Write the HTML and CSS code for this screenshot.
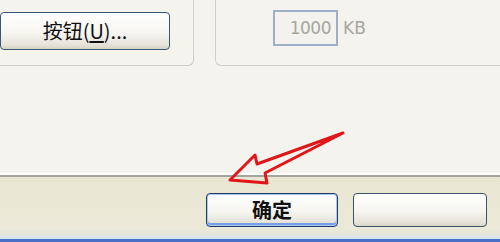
FILE: index.html
```html
<!DOCTYPE html>
<html>
<head>
<meta charset="utf-8">
<link rel="stylesheet" href="styles.css">
</head>
<body>
<div class="screen">
  <div class="page">
    <div class="groups">
      <div class="group group-left">
        <button class="btn btn-wide">按钮(<u>U</u>)...</button>
      </div>
      <div class="group group-right">
        <div class="field">
          <div class="input">1000</div>
          <span class="unit">KB</span>
        </div>
      </div>
    </div>
  </div>
  <div class="footer">
    <button class="btn btn-default">确定</button>
    <button class="btn btn-plain"></button>
  </div>
  <svg class="arrow" width="500" height="242" viewBox="0 0 500 242">
    <path d="M230 180 L255 155 L257 164 L343 133 L265 173 L267 183 Z" fill="none" stroke="#e0161a" stroke-width="3" stroke-linejoin="round"/>
  </svg>
</div>
</body>
</html>
```
FILE: styles.css
```css
* { box-sizing: border-box; }
html, body { margin: 0; padding: 0; }
body { width: 500px; height: 242px; overflow: hidden; font-family: "Liberation Sans", "Noto Sans CJK SC", sans-serif; }
.screen { position: relative; width: 500px; height: 242px; display: flex; flex-direction: column; }
.page {
  height: 177px;
  background: #f4f3ee;
  border-bottom: 2px solid #a6a59c;
  box-shadow: inset 0 -2px 0 #ffffff;
}
.groups { display: flex; height: 66px; }
.group { border-bottom: 1px solid #d2d0c4; }
.group-left {
  width: 194px;
  border-right: 1px solid #d2d0c4;
  border-bottom-right-radius: 6px;
  padding-top: 12px;
}
.group-right {
  flex: 1;
  margin-left: 21px;
  border-left: 1px solid #d2d0c4;
  border-bottom-left-radius: 6px;
  padding: 10px 0 0 57px;
}
.btn {
  font-family: "Noto Sans CJK SC", sans-serif;
  color: #111;
  border: 1px solid #1d3f66;
  border-radius: 4px;
  background: linear-gradient(#ffffff 0%, #f6f5f0 55%, #e4e2d8 90%, #d6d2c4 100%);
  padding: 0;
}
.btn-wide {
  display: block;
  width: 170px;
  height: 38px;
  font-size: 20px;
  line-height: 1;
  border-color: #3a5676;
}
.btn-wide u { text-decoration: underline; text-underline-offset: 2px; }
.field { display: flex; align-items: center; gap: 5px; }
.input {
  width: 65px;
  height: 36px;
  border: 2px solid #a0b0c4;
  background: #f3f2ee;
  color: #a7a69f;
  font-family: "DejaVu Sans", sans-serif;
  font-size: 17px;
  letter-spacing: -0.5px;
  display: flex;
  align-items: center;
  justify-content: flex-end;
  padding-right: 5px;
}
.unit { color: #a7a69f; font-family: "DejaVu Sans", sans-serif; font-size: 17px; }
.footer {
  flex: 1;
  background: linear-gradient(#e9e6d2 0%, #ece9d8 80%, #e4e6da 94%, #d6e4ee 96%);
  border-bottom: 3px solid #4a6fc6;
  display: flex;
  padding: 16px 0 0 206px;
  gap: 15px;
}
.btn-default {
  width: 132px;
  height: 34px;
  font-size: 20px;
  line-height: 1;
  font-weight: 700;
  border-color: #1f3f6a;
  box-shadow: inset 0 0 0 1px #a8c6f2, inset 0 -2px 0 1px #7a9ee6;
}
.btn-plain {
  width: 134px;
  height: 34px;
  border-color: #3c5266;
}
.arrow { position: absolute; left: 0; top: 0; pointer-events: none; }
```
